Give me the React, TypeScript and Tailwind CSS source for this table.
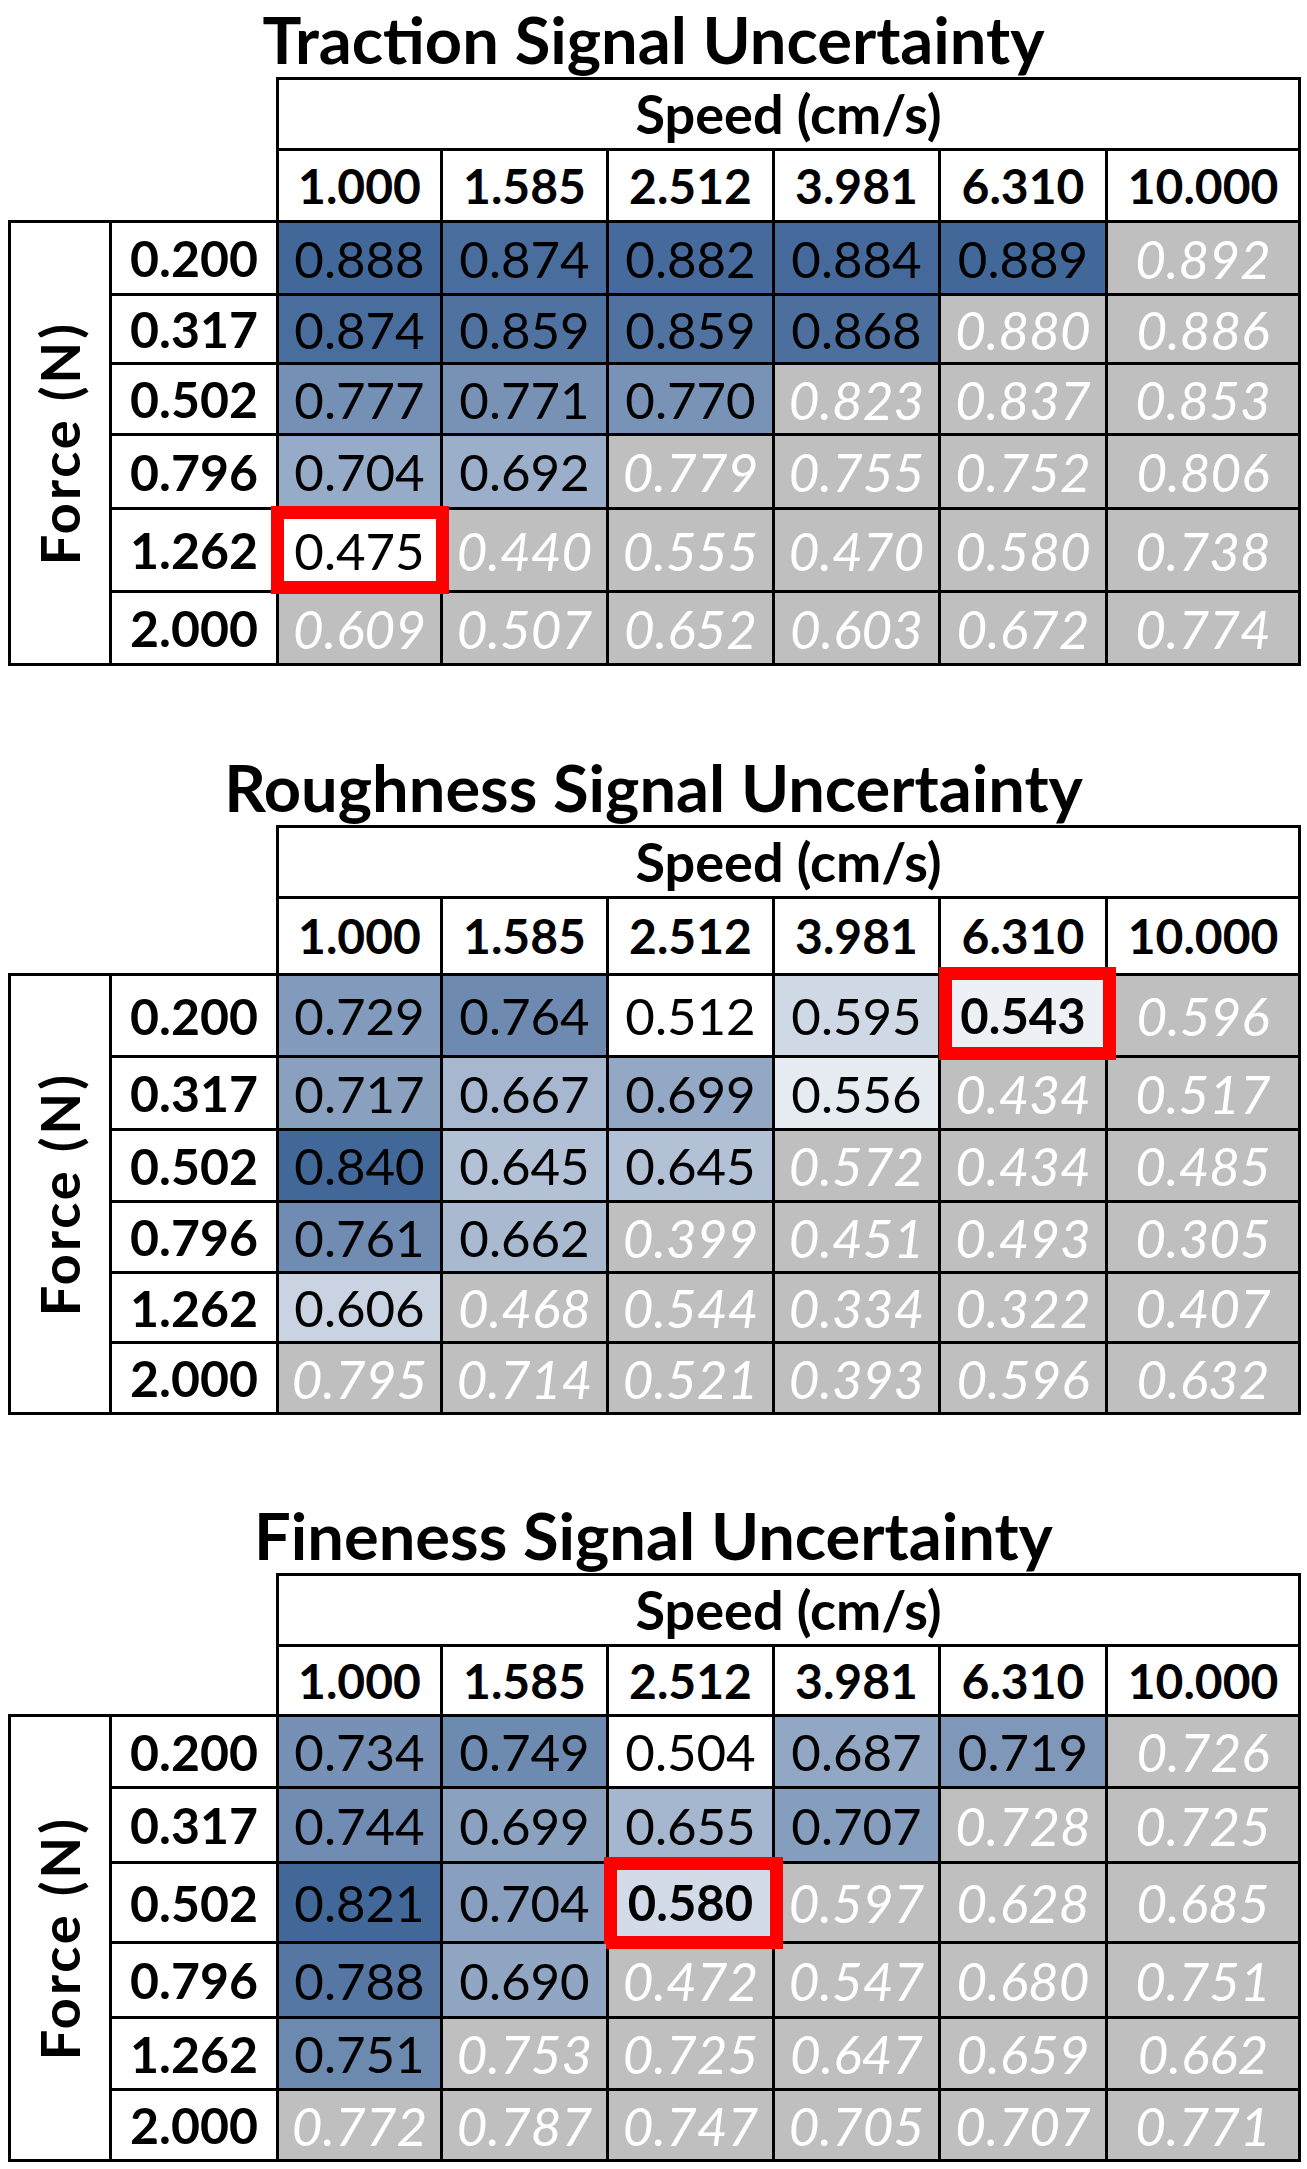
import React from "react";

const SPEEDS = ["1.000", "1.585", "2.512", "3.981", "6.310", "10.000"];
const FORCES = ["0.200", "0.317", "0.502", "0.796", "1.262", "2.000"];
const COL_CLASSES = ["w-[164px]", "w-[166px]", "w-[166px]", "w-[166px]", "w-[167px]", "w-[193px]"];

// darkest shade of the colour scale; lightest end is white
const DARK = [66, 103, 153];

interface SignalTable {
  title: string;
  values: number[][];
  highlight: [number, number];
  boldHighlight: boolean;
  sectionClass: string;
  headerClass: string;
  rowClasses: string[];
  boxClass: string;
}

const TABLES: SignalTable[] = [
  {
    title: "Traction Signal Uncertainty",
    values: [
      [0.888, 0.874, 0.882, 0.884, 0.889, 0.892],
      [0.874, 0.859, 0.859, 0.868, 0.88, 0.886],
      [0.777, 0.771, 0.77, 0.823, 0.837, 0.853],
      [0.704, 0.692, 0.779, 0.755, 0.752, 0.806],
      [0.475, 0.44, 0.555, 0.47, 0.58, 0.738],
      [0.609, 0.507, 0.652, 0.603, 0.672, 0.774],
    ],
    highlight: [4, 0],
    boldHighlight: false,
    sectionClass: "pt-0",
    headerClass: "h-[72px]",
    rowClasses: ["h-[73px]", "h-[69px]", "h-[71px]", "h-[74px]", "h-[83px]", "h-[73px]"],
    boxClass: "-left-[8px] -right-[9px] -top-[4px] -bottom-[4px]",
  },
  {
    title: "Roughness Signal Uncertainty",
    values: [
      [0.729, 0.764, 0.512, 0.595, 0.543, 0.596],
      [0.717, 0.667, 0.699, 0.556, 0.434, 0.517],
      [0.84, 0.645, 0.645, 0.572, 0.434, 0.485],
      [0.761, 0.662, 0.399, 0.451, 0.493, 0.305],
      [0.606, 0.468, 0.544, 0.334, 0.322, 0.407],
      [0.795, 0.714, 0.521, 0.393, 0.596, 0.632],
    ],
    highlight: [0, 4],
    boldHighlight: true,
    sectionClass: "pt-[82px]",
    headerClass: "h-[77px]",
    rowClasses: ["h-[82px]", "h-[73px]", "h-[72px]", "h-[71px]", "h-[70px]", "h-[71px]"],
    boxClass: "-left-[2px] -right-[11px] -top-[9px] -bottom-[5px]",
  },
  {
    title: "Fineness Signal Uncertainty",
    values: [
      [0.734, 0.749, 0.504, 0.687, 0.719, 0.726],
      [0.744, 0.699, 0.655, 0.707, 0.728, 0.725],
      [0.821, 0.704, 0.58, 0.597, 0.628, 0.685],
      [0.788, 0.69, 0.472, 0.547, 0.68, 0.751],
      [0.751, 0.753, 0.725, 0.647, 0.659, 0.662],
      [0.772, 0.787, 0.747, 0.705, 0.707, 0.771],
    ],
    highlight: [2, 2],
    boldHighlight: true,
    sectionClass: "pt-[81px]",
    headerClass: "h-[70px]",
    rowClasses: ["h-[72px]", "h-[75px]", "h-[80px]", "h-[75px]", "h-[72px]", "h-[71px]"],
    boxClass: "-left-[5px] -right-[11px] -top-[7px] -bottom-[8px]",
  },
];

// cells left of the staircase are the measured ones; the rest are greyed out
const isActive = (row: number, col: number) => col < 5 - row;

function shade(v: number, min: number, max: number): string {
  const t = (v - min) / (max - min);
  const [r, g, b] = DARK.map((d) => Math.round(255 - t * (255 - d)));
  return `rgb(${r}, ${g}, ${b})`;
}

function Table({ table }: { table: SignalTable }) {
  const active = table.values.flatMap((row, r) => row.filter((_, c) => isActive(r, c)));
  const min = Math.min(...active);
  const max = Math.max(...active);

  return (
    <section className={table.sectionClass}>
      <h2 className="h-[77px] text-center text-[65px] font-bold leading-[1.2] text-black">
        {table.title}
      </h2>
      <div className="pl-[8px]">
        <table className="w-[1290px] table-fixed border-collapse leading-none text-black">
          <colgroup>
            <col className="w-[101px]" />
            <col className="w-[167px]" />
            {COL_CLASSES.map((c, i) => (
              <col key={i} className={c} />
            ))}
          </colgroup>
          <tbody>
            <tr className="h-[71px]">
              <td colSpan={2} rowSpan={2} className="p-0" />
              <td colSpan={6} className="border-[3px] border-black p-0 text-center align-middle text-[54px] font-bold">
                Speed (cm/s)
              </td>
            </tr>
            <tr className={table.headerClass}>
              {SPEEDS.map((s) => (
                <td key={s} className="border-[3px] border-black p-0 text-center align-middle text-[48px] font-bold">
                  {s}
                </td>
              ))}
            </tr>
            {FORCES.map((f, r) => (
              <tr key={f} className={table.rowClasses[r]}>
                {r === 0 && (
                  <td rowSpan={6} className="border-[3px] border-black p-0 align-middle">
                    <div className="flex justify-center">
                      <div className="w-fit rotate-180 text-[54px] font-bold tracking-[3px] [writing-mode:vertical-rl]">
                        Force (N)
                      </div>
                    </div>
                  </td>
                )}
                <td className="border-[3px] border-black p-0 text-center align-middle text-[50px] font-bold">{f}</td>
                {table.values[r].map((v, c) => {
                  const on = isActive(r, c);
                  const hit = table.highlight[0] === r && table.highlight[1] === c;
                  return (
                    <td
                      key={c}
                      className={
                        on
                          ? `relative border-[3px] border-black p-0 text-center align-middle ${hit && table.boldHighlight ? "text-[49px] font-bold" : "text-[51px]"}`
                          : "border-[3px] border-black bg-[#bfbfbf] p-0 text-center align-middle text-[53px] italic text-white"
                      }
                      style={on ? { background: shade(v, min, max) } : undefined}
                    >
                      {v.toFixed(3)}
                      {hit && (
                        <div className={`pointer-events-none absolute border-[13px] border-[#ff0000] ${table.boxClass}`} />
                      )}
                    </td>
                  );
                })}
              </tr>
            ))}
          </tbody>
        </table>
      </div>
    </section>
  );
}

export default function App() {
  return (
    <div className="min-h-[2169px] w-[1307px] bg-white font-[Lato,sans-serif]">
      {TABLES.map((t) => (
        <Table key={t.title} table={t} />
      ))}
    </div>
  );
}
